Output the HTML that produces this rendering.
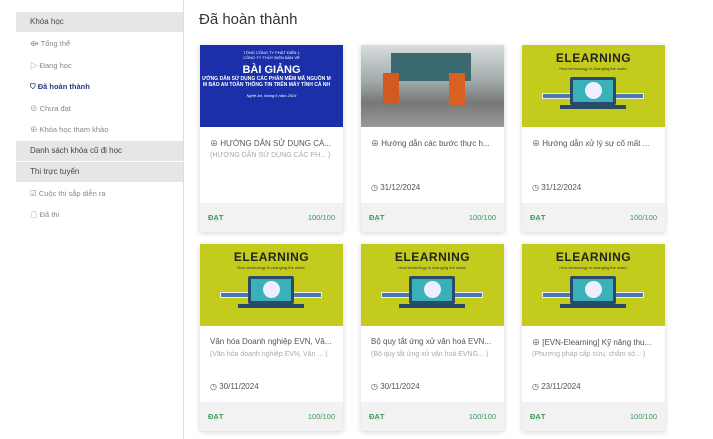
<!DOCTYPE html>
<html><head><meta charset="utf-8"><style>
*{box-sizing:border-box;margin:0;padding:0}
body{width:713px;height:439px;background:#fff;font-family:"Liberation Sans","Noto Sans CJK SC",sans-serif;position:relative;overflow:hidden;color:#555}
.side{position:absolute;left:16px;top:12px;width:167px}
.vl{position:absolute;left:183px;top:0;width:1px;height:439px;background:#ddd}
.h{background:#e6e6e6;height:20px;line-height:20px;padding-left:14px;font-size:8px;color:#444;margin-bottom:1px}
.it{height:21.5px;line-height:21.5px;padding-left:14px;font-size:7.5px;color:#888}
.it.a{color:#2b3a7a;font-weight:bold}
h1{position:absolute;left:199px;top:11px;font-size:15px;font-weight:normal;color:#333}
.card{position:absolute;width:143px;height:187px;background:#fff;box-shadow:0 1px 5px rgba(0,0,0,.18)}
.img{height:82px;position:relative;overflow:hidden}
.t{position:absolute;left:10px;top:93px;font-size:8px;color:#555;white-space:nowrap}
.s{position:absolute;left:10px;top:107px;font-size:7px;color:#aaa;white-space:nowrap}
.d{position:absolute;left:10px;top:138px;font-size:8px;color:#555}
.f{position:absolute;left:0;bottom:0;width:100%;height:29px;background:#f2f2f2;font-size:7.5px;line-height:29px;padding:0 8px;color:#3a9a5a}
.f b{font-weight:bold}.f span{float:right}
.el{background:#c3cc1c}
.el .w{position:absolute;top:6px;width:100%;text-align:center;font-weight:bold;font-size:12px;color:#222;letter-spacing:.5px}
.el .w2{position:absolute;top:21px;width:100%;text-align:center;font-size:4px;color:#333}
.lap{position:absolute;left:48px;top:32px;width:46px;height:28px;background:#2a4a6a;border-radius:2px}
.lap i{position:absolute;left:3px;top:3px;width:40px;height:22px;background:#3ab0b8}
.lap i:after{content:"";position:absolute;left:12px;top:2px;width:17px;height:17px;border-radius:50%;background:#eef}
.bk{position:absolute;top:48px;height:6px;background:#4a78b0;border:1px solid #eee}
.base{position:absolute;left:38px;top:60px;width:66px;height:4px;background:#2a4a6a}
</style></head><body>
<div class="vl"></div>
<div class="side">
<div class="h">Khóa học</div>
<div class="it">⟴ Tổng thể</div>
<div class="it">▷ Đang học</div>
<div class="it a">⛉ Đã hoàn thành</div>
<div class="it">⊘ Chưa đạt</div>
<div class="it">⊕ Khóa học tham khảo</div>
<div class="h" style="margin-top:0">Danh sách khóa cũ đi học</div>
<div class="h">Thi trực tuyến</div>
<div class="it">☑ Cuộc thi sắp diễn ra</div>
<div class="it">☖ Đã thi</div>
</div>
<h1>Đã hoàn thành</h1>

<div class="card" style="left:200px;top:45px"><div class="img" style="background:#1a2fa8;color:#fff;text-align:center">
<div style="font-size:4px;padding-top:5px">TỔNG CÔNG TY PHÁT ĐIỆN 1<br>CÔNG TY THỦY ĐIỆN BẢN VẼ</div>
<div style="font-size:11px;font-weight:bold;margin-top:4px">BÀI GIẢNG</div>
<div style="font-size:5px;font-weight:bold;white-space:nowrap;margin-left:-10px">ƯỚNG DẪN SỬ DỤNG CÁC PHẦN MỀM MÃ NGUỒN M<br>M BẢO AN TOÀN THÔNG TIN TRÊN MÁY TÍNH CÁ NH</div>
<div style="font-size:4px;margin-top:5px;font-style:italic">Nghệ An, tháng 6 năm 2024</div></div>
<div class="t">⊕ HƯỚNG DẪN SỬ DỤNG CÁ...</div><div class="s">(HƯỚNG DẪN SỬ DỤNG CÁC PH... )</div>
<div class="f"><b>ĐẠT</b><span>100/100</span></div></div>

<div class="card" style="left:361px;top:45px"><div class="img" style="background:linear-gradient(#d8dde0,#a0a8a8 45%,#777 70%,#999)">
<div style="position:absolute;left:30px;top:8px;width:80px;height:28px;background:#3a6a70"></div>
<div style="position:absolute;left:22px;top:28px;width:16px;height:30px;background:#d05a20"></div>
<div style="position:absolute;left:88px;top:28px;width:16px;height:32px;background:#d86020"></div></div>
<div class="t">⊕ Hướng dẫn các bước thực h...</div>
<div class="d">◷ 31/12/2024</div>
<div class="f"><b>ĐẠT</b><span>100/100</span></div></div>

<div class="card" style="left:522px;top:45px"><div class="img el"><div class="w">ELEARNING</div><div class="w2">How technology is changing the world.</div><div class="bk" style="left:20px;width:34px"></div><div class="bk" style="left:88px;width:34px"></div><div class="lap"><i></i></div><div class="base"></div></div>
<div class="t">⊕ Hướng dẫn xử lý sự cố mất ...</div>
<div class="d">◷ 31/12/2024</div>
<div class="f"><b>ĐẠT</b><span>100/100</span></div></div>

<div class="card" style="left:200px;top:244px"><div class="img el"><div class="w">ELEARNING</div><div class="w2">How technology is changing the world.</div><div class="bk" style="left:20px;width:34px"></div><div class="bk" style="left:88px;width:34px"></div><div class="lap"><i></i></div><div class="base"></div></div>
<div class="t">Văn hóa Doanh nghiệp EVN, Vă...</div><div class="s">(Văn hóa doanh nghiệp EVN, Văn ... )</div>
<div class="d">◷ 30/11/2024</div>
<div class="f"><b>ĐẠT</b><span>100/100</span></div></div>

<div class="card" style="left:361px;top:244px"><div class="img el"><div class="w">ELEARNING</div><div class="w2">How technology is changing the world.</div><div class="bk" style="left:20px;width:34px"></div><div class="bk" style="left:88px;width:34px"></div><div class="lap"><i></i></div><div class="base"></div></div>
<div class="t">Bộ quy tắt ứng xử văn hoá EVN...</div><div class="s">(Bộ quy tắt ứng xử văn hoá EVNG... )</div>
<div class="d">◷ 30/11/2024</div>
<div class="f"><b>ĐẠT</b><span>100/100</span></div></div>

<div class="card" style="left:522px;top:244px"><div class="img el"><div class="w">ELEARNING</div><div class="w2">How technology is changing the world.</div><div class="bk" style="left:20px;width:34px"></div><div class="bk" style="left:88px;width:34px"></div><div class="lap"><i></i></div><div class="base"></div></div>
<div class="t">⊕ [EVN-Elearning] Kỹ năng thu...</div><div class="s">(Phương pháp cấp cứu, chăm só... )</div>
<div class="d">◷ 23/11/2024</div>
<div class="f"><b>ĐẠT</b><span>100/100</span></div></div>
</body></html>
